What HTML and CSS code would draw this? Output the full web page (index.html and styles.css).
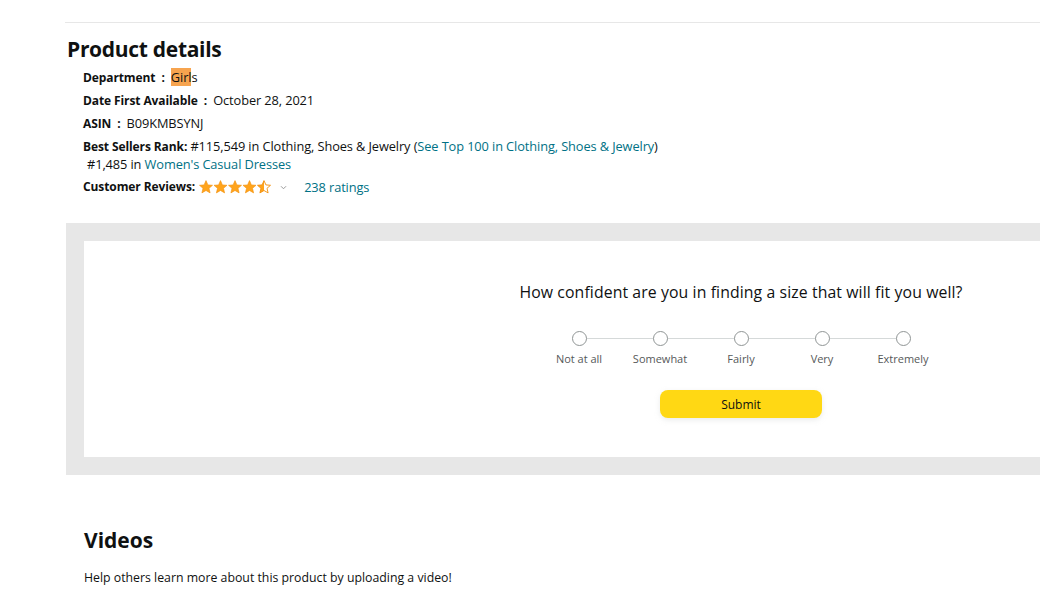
FILE: index.html
```html
<!DOCTYPE html>
<html lang="en">
<head>
<meta charset="utf-8">
<title>Product details</title>
<link rel="stylesheet" href="styles.css">
</head>
<body>
<div class="page">
  <hr class="divider">
  <section class="details">
    <h2 class="title">Product details</h2>
    <ul class="facts">
      <li class="fact"><span class="label">Department&nbsp; : &nbsp;</span><span><mark class="hl">Girl</mark>s</span></li>
      <li class="fact"><span class="label">Date First Available&nbsp; : &nbsp;</span><span>October 28, 2021</span></li>
      <li class="fact"><span class="label">ASIN&nbsp; : &nbsp;</span><span>B09KMBSYNJ</span></li>
      <li class="fact rank"><span class="label">Best Sellers Rank:</span> #115,549 in Clothing, Shoes &amp; Jewelry (<a class="link" href="#">See Top 100 in Clothing, Shoes &amp; Jewelry</a>)
        <div class="sub">#1,485 in <a class="link" href="#">Women's Casual Dresses</a></div>
      </li>
      <li class="fact reviews"><span class="label">Customer Reviews:</span>
        <span class="stars">
          <svg viewBox="0 0 72 14" width="72" height="14" aria-hidden="true">
            <defs>
              <path id="st" d="M7 0.6 L8.9 4.9 L13.5 5.3 L10 8.3 L11.1 12.9 L7 10.5 L2.9 12.9 L4 8.3 L0.5 5.3 L5.1 4.9 Z"/>
              <linearGradient id="half" x1="0" x2="1" y1="0" y2="0">
                <stop offset="0.5" stop-color="#ffa41c"/><stop offset="0.5" stop-color="#fff"/>
              </linearGradient>
            </defs>
            <use href="#st" x="0" fill="#ffa41c" stroke="#f28e0a" stroke-width="0.6"/>
            <use href="#st" x="14.5" fill="#ffa41c" stroke="#f28e0a" stroke-width="0.6"/>
            <use href="#st" x="29" fill="#ffa41c" stroke="#f28e0a" stroke-width="0.6"/>
            <use href="#st" x="43.5" fill="#ffa41c" stroke="#f28e0a" stroke-width="0.6"/>
            <use href="#st" x="58" fill="url(#half)" stroke="#f28e0a" stroke-width="0.9"/>
          </svg>
        </span>
        <svg class="chev" viewBox="0 0 8 6" width="7" height="5" aria-hidden="true"><path d="M1 1.5 L4 4.5 L7 1.5" fill="none" stroke="#999" stroke-width="1.2"/></svg>
        <a class="link ratings" href="#">238 ratings</a>
      </li>
    </ul>
  </section>

  <section class="survey-wrap">
    <div class="card">
      <div class="spacer"></div>
      <div class="survey">
        <p class="question">How confident are you in finding a size that will fit you well?</p>
        <div class="scale">
          <div class="track"></div>
          <label class="opt"><span class="radio"></span><span class="opt-text">Not at all</span></label>
          <label class="opt"><span class="radio"></span><span class="opt-text">Somewhat</span></label>
          <label class="opt"><span class="radio"></span><span class="opt-text">Fairly</span></label>
          <label class="opt"><span class="radio"></span><span class="opt-text">Very</span></label>
          <label class="opt"><span class="radio"></span><span class="opt-text">Extremely</span></label>
        </div>
        <button class="submit" type="button">Submit</button>
      </div>
    </div>
  </section>

  <section class="videos">
    <h2 class="vtitle">Videos</h2>
    <p class="vtext">Help others learn more about this product by uploading a video!</p>
  </section>
</div>
</body>
</html>
```
FILE: styles.css
```css
* { box-sizing: border-box; }
html, body { margin: 0; padding: 0; }
body {
  background: #fff;
  color: #0f1111;
  font-family: "Open Sans", "Liberation Sans", Arial, sans-serif;
  overflow: hidden;
}
.page { padding-left: 65px; padding-top: 22px; width: 1040px; }
.divider { margin: 0; border: 0; border-top: 1px solid #e7e7e7; height: 0; }

.details { padding-left: 2px; }
.title {
  margin: 12px 0 0 0;
  font-size: 21px;
  font-weight: 700;
  line-height: 28px;
  letter-spacing: -0.3px;
}
.facts { list-style: none; margin: 5px 0 0 16px; padding: 0; font-size: 12.8px; line-height: 18px; }
.fact { margin-bottom: 5px; letter-spacing: -0.1px; height: 18px; }
.fact.rank { height: auto; }
.label { font-weight: 700; font-size: 12px; }
.hl { background: #f7a44f; color: #0f1111; padding: 0; }
.link { color: #007185; text-decoration: none; }
.sub { margin-left: 4px; height: 17px; line-height: 16px; }
.reviews { display: flex; align-items: center; }
.stars { display: inline-flex; margin-left: 4px; }
.chev { margin-left: 9px; }
.ratings { margin-left: 17px; }

.survey-wrap {
  margin-top: 27px;
  background: #e7e7e7;
  padding: 18px 0 18px 18px;
  margin-left: 1px;
}
.card {
  background: #fff;
  height: 216px;
  display: grid;
  grid-template-columns: 407px 500px;
}
.survey { display: flex; flex-direction: column; align-items: center; padding-top: 41px; }
.question { margin: 0; font-size: 15.8px; line-height: 20px; letter-spacing: 0.1px; }
.scale { position: relative; display: flex; margin-top: 28px; }
.track { position: absolute; left: 40px; right: 40px; top: 8px; border-top: 1px solid #d5d9d9; }
.opt { width: 81px; display: flex; flex-direction: column; align-items: center; position: relative; }
.radio {
  width: 15px; height: 15px; border-radius: 50%;
  border: 1px solid #909595; background: #fff; margin-top: 1px;
}
.opt-text { margin-top: 6px; font-size: 11px; line-height: 14px; color: #565959; }
.submit {
  margin-top: 24px;
  width: 162px; height: 28px;
  background: #ffd814;
  border: 0; border-radius: 8px;
  font-family: inherit; font-size: 12px; color: #0f1111;
  box-shadow: 0 2px 5px rgba(213,217,217,0.5);
}

.videos { padding-left: 19px; padding-top: 51px; }
.vtitle { margin: 0; font-size: 21px; line-height: 28px; font-weight: 700; }
.vtext { margin: 16px 0 0 0; font-size: 12.3px; line-height: 16px; }
```
